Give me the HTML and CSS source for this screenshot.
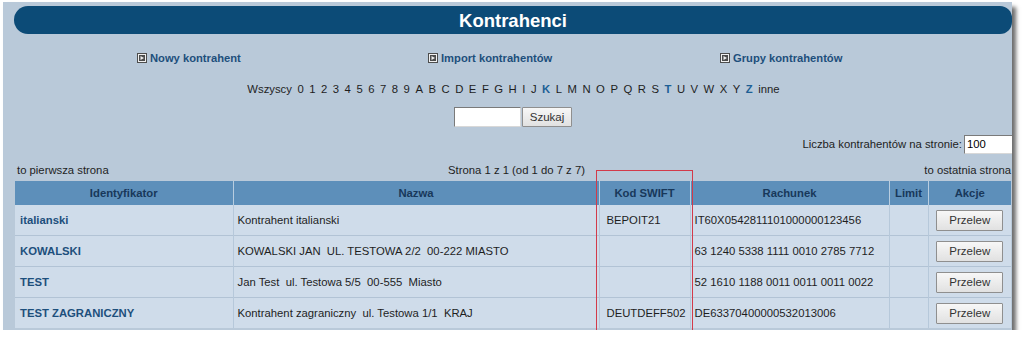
FILE: index.html
```html
<!DOCTYPE html>
<html lang="pl">
<head>
<meta charset="utf-8">
<title>Kontrahenci</title>
<link rel="stylesheet" href="styles.css">
</head>
<body>
<div class="panel">
  <div class="title">Kontrahenci</div>

  <div class="links">
    <a class="link" href="#"><svg class="ico" viewBox="0 0 10 10"><rect width="10" height="10" fill="#4d4d4d"/><rect x="1.5" y="1.5" width="7" height="7" fill="none" stroke="#f0f0f0" stroke-width="1"/><path d="M3.5 3 L7 5 L3.5 7 Z" fill="#f0f0f0"/></svg>Nowy kontrahent</a>
    <a class="link" href="#"><svg class="ico" viewBox="0 0 10 10"><rect width="10" height="10" fill="#4d4d4d"/><rect x="1.5" y="1.5" width="7" height="7" fill="none" stroke="#f0f0f0" stroke-width="1"/><path d="M3.5 3 L7 5 L3.5 7 Z" fill="#f0f0f0"/></svg>Import kontrahentów</a>
    <a class="link" href="#"><svg class="ico" viewBox="0 0 10 10"><rect width="10" height="10" fill="#4d4d4d"/><rect x="1.5" y="1.5" width="7" height="7" fill="none" stroke="#f0f0f0" stroke-width="1"/><path d="M3.5 3 L7 5 L3.5 7 Z" fill="#f0f0f0"/></svg>Grupy kontrahentów</a>
  </div>

  <div class="alpha">
    <span>Wszyscy</span><span>0</span><span>1</span><span>2</span><span>3</span><span>4</span><span>5</span><span>6</span><span>7</span><span>8</span><span>9</span><span>A</span><span>B</span><span>C</span><span>D</span><span>E</span><span>F</span><span>G</span><span>H</span><span>I</span><span>J</span><a class="on" href="#">K</a><span>L</span><span>M</span><span>N</span><span>O</span><span>P</span><span>Q</span><span>R</span><span>S</span><a class="on" href="#">T</a><span>U</span><span>V</span><span>W</span><span>X</span><span>Y</span><a class="on" href="#">Z</a><span>inne</span>
  </div>

  <div class="search">
    <input class="search-input" type="text" value="">
    <button class="btn search-btn" type="button">Szukaj</button>
  </div>

  <div class="perpage">
    <span>Liczba kontrahentów na stronie:</span>
    <input class="perpage-input" type="text" value="100">
  </div>

  <div class="pager">
    <span>to pierwsza strona</span>
    <span>Strona 1 z 1 (od 1 do 7 z 7)</span>
    <span>to ostatnia strona</span>
  </div>

  <table class="grid">
    <colgroup>
      <col class="c-id"><col class="c-name"><col class="c-swift"><col class="c-acc"><col class="c-limit"><col class="c-act">
    </colgroup>
    <thead>
      <tr><th>Identyfikator</th><th>Nazwa</th><th>Kod SWIFT</th><th>Rachunek</th><th>Limit</th><th>Akcje</th></tr>
    </thead>
    <tbody>
      <tr><td class="id"><a href="#">italianski</a></td><td>Kontrahent italianski</td><td class="swift">BEPOIT21</td><td class="acc">IT60X0542811101000000123456</td><td></td><td class="act"><button class="btn" type="button">Przelew</button></td></tr>
      <tr><td class="id"><a href="#">KOWALSKI</a></td><td>KOWALSKI JAN&nbsp; UL. TESTOWA 2/2&nbsp; 00-222 MIASTO</td><td class="swift"></td><td class="acc">63 1240 5338 1111 0010 2785 7712</td><td></td><td class="act"><button class="btn" type="button">Przelew</button></td></tr>
      <tr><td class="id"><a href="#">TEST</a></td><td>Jan Test&nbsp; ul. Testowa 5/5&nbsp; 00-555&nbsp; Miasto</td><td class="swift"></td><td class="acc">52 1610 1188 0011 0011 0011 0022</td><td></td><td class="act"><button class="btn" type="button">Przelew</button></td></tr>
      <tr><td class="id"><a href="#">TEST ZAGRANICZNY</a></td><td>Kontrahent zagraniczny&nbsp; ul. Testowa 1/1&nbsp; KRAJ</td><td class="swift">DEUTDEFF502</td><td class="acc">DE63370400000532013006</td><td></td><td class="act"><button class="btn" type="button">Przelew</button></td></tr>
    </tbody>
  </table>

  <div class="highlight"></div>
</div>
</body>
</html>
```

FILE: styles.css
```css
html, body {
  margin: 0;
  padding: 0;
  background: #ffffff;
}

body {
  font-family: "Liberation Sans", Arial, sans-serif;
  font-size: 11.3px;
  color: #1e1e1e;
}

.panel {
  position: relative;
  margin: 2px 0 0 3px;
  width: 1009px;
  height: 328px;
  background: #b9c9d9;
  box-shadow: 4px 5px 4px rgba(60, 60, 60, 0.75);
  padding-top: 4px;
  box-sizing: border-box;
}

.title {
  margin-left: 11px;
  height: 28px;
  line-height: 29px;
  background: #0c4b77;
  border-radius: 14px 12px 12px 14px;
  color: #ffffff;
  font-size: 18.5px;
  font-weight: bold;
  text-align: center;
}

.links {
  display: flex;
  margin-top: 14px;
  height: 20px;
  align-items: center;
  padding-left: 134px;
}

.link {
  display: flex;
  align-items: center;
  width: 291px;
  color: #1d4f7c;
  font-size: 11.2px;
  font-weight: bold;
  text-decoration: none;
}

.link:nth-child(2) { width: 292px; }

.ico {
  width: 10px;
  height: 10px;
  margin-right: 3px;
  flex: none;
}

.alpha {
  display: flex;
  justify-content: center;
  align-items: center;
  gap: 5.5px;
  margin-top: 11px;
  height: 20px;
  padding-left: 12px;
}

.alpha a {
  color: #1d5f95;
  text-decoration: none;
  font-weight: bold;
}

.search {
  display: flex;
  justify-content: center;
  align-items: center;
  margin-top: 8px;
  height: 20px;
  padding-left: 11px;
}

.search-input {
  box-sizing: border-box;
  width: 67px;
  height: 20px;
  border: 1px solid #7a7a7a;
  border-right-color: #d8d8d8;
  border-bottom-color: #d8d8d8;
  background: #ffffff;
  margin: 0 1px 0 0;
  padding: 0 2px;
  font: 11.3px "Liberation Sans", Arial, sans-serif;
}

.btn {
  box-sizing: border-box;
  height: 20px;
  padding: 0 6px;
  border: 1px solid #8f8f8f;
  border-radius: 1px;
  background: linear-gradient(#f7f7f7, #e1e1e1);
  color: #333333;
  font: 11.5px "Liberation Sans", Arial, sans-serif;
}

.search-btn {
  width: 50px;
}

.perpage {
  display: flex;
  justify-content: flex-end;
  align-items: center;
  gap: 2px;
  margin-top: 7px;
  height: 20px;
  color: #1e1e1e;
}

.perpage-input {
  box-sizing: border-box;
  width: 48px;
  height: 19px;
  border: 1px solid #7a7a7a;
  border-right: 0;
  border-bottom-color: #d8d8d8;
  background: #ffffff;
  padding: 0 2px;
  font: 11.3px "Liberation Sans", Arial, sans-serif;
}

.pager {
  display: flex;
  justify-content: space-between;
  align-items: center;
  margin: 8px 1px 0 14px;
  height: 16px;
}

.grid {
  margin: 3px 0 0 12px;
  width: 996px;
  border-collapse: collapse;
  table-layout: fixed;
}

.c-id { width: 218px; }
.c-name { width: 366px; }
.c-swift { width: 91px; }
.c-acc { width: 199px; }
.c-limit { width: 39px; }
.c-act { width: 83px; }

.grid th {
  height: 24px;
  padding: 0;
  background: #5d8fba;
  color: #18385a;
  font-weight: bold;
  text-align: center;
  border-left: 1px solid #b8cde0;
}

.grid th:first-child { border-left: 0; }

.grid td {
  height: 30px;
  padding: 0 4px;
  background: #cfdcea;
  border-left: 1px solid #b6c8da;
  border-top: 1px solid #b2c3d5;
  color: #1e1e1e;
  white-space: nowrap;
  overflow: hidden;
}

.grid td:first-child { border-left: 0; }
.grid tbody tr:first-child td { border-top: 0; }

.grid td.id { padding-left: 5px; }

.grid td.id a {
  color: #1d4f7c;
  font-weight: bold;
  text-decoration: none;
}

.grid td.swift { padding-left: 7px; }
.grid td.acc { padding-left: 4px; }

.grid td.act {
  text-align: center;
  padding: 0;
}

.act .btn {
  width: 67px;
  height: 21px;
  padding: 0;
}

.highlight {
  position: absolute;
  left: 593px;
  top: 168px;
  width: 97px;
  height: 168px;
  border: 1px solid #d23a4a;
  box-sizing: border-box;
}
```
